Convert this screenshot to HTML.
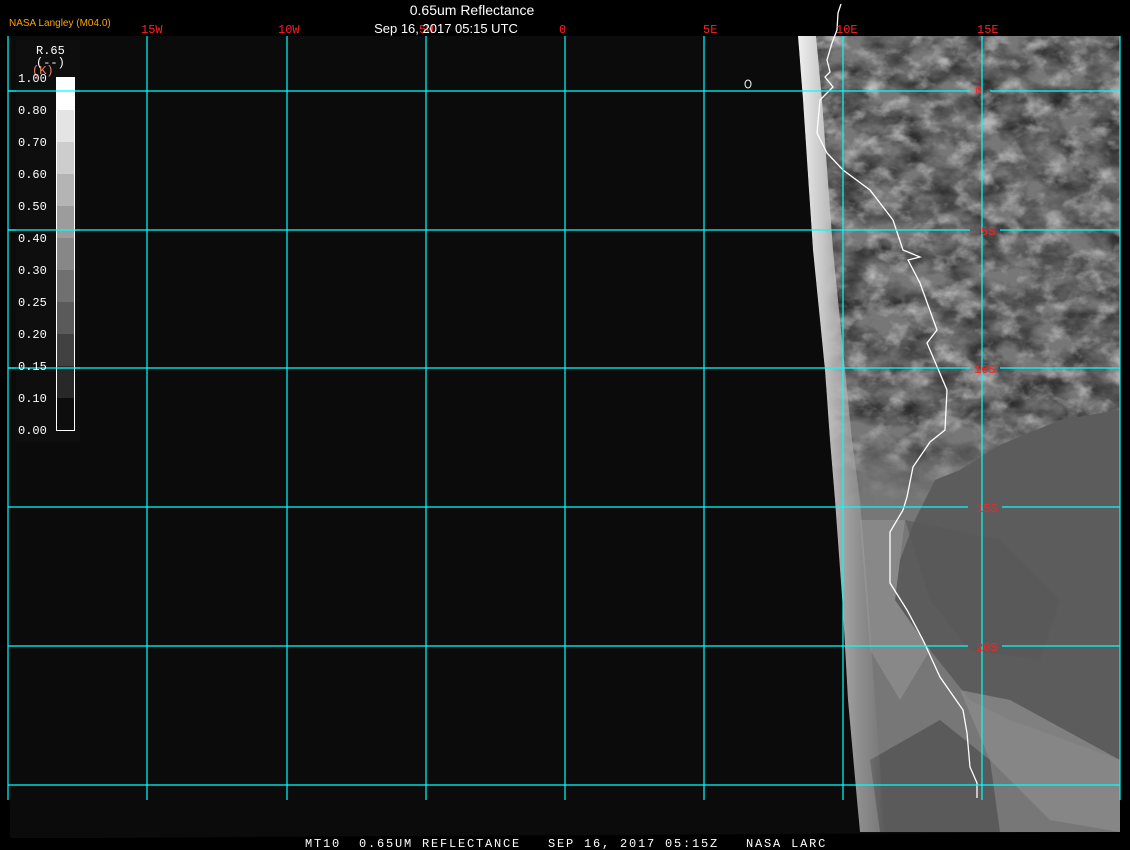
<!DOCTYPE html>
<html><head><meta charset="utf-8"><style>
html,body{margin:0;padding:0;background:#000;width:1130px;height:850px;overflow:hidden}
svg{display:block}
.m{font-family:"Liberation Mono",monospace;font-size:12px}
.s{font-family:"Liberation Sans",sans-serif}
</style></head><body>
<svg width="1130" height="850" viewBox="0 0 1130 850" xmlns="http://www.w3.org/2000/svg">
<defs>
<filter id="tex" x="0" y="0" width="100%" height="100%">
<feTurbulence type="fractalNoise" baseFrequency="0.03 0.045" numOctaves="4" seed="7"/>
<feColorMatrix type="matrix" values="0 0 0 0 0  0 0 0 0 0  0 0 0 0 0  1.3 0 0 0 -0.45"/>
</filter>
<filter id="tex2" x="0" y="0" width="100%" height="100%">
<feTurbulence type="fractalNoise" baseFrequency="0.045 0.06" numOctaves="4" seed="21"/>
<feColorMatrix type="matrix" values="0 0 0 0 1  0 0 0 0 1  0 0 0 0 1  1.3 0 0 0 -0.62"/>
</filter>
<linearGradient id="fade" x1="0" y1="0" x2="0" y2="1">
<stop offset="0" stop-color="#fff"/><stop offset="0.8" stop-color="#fff"/><stop offset="1" stop-color="#000"/>
</linearGradient>
<mask id="fm"><rect x="790" y="36" width="340" height="470" fill="url(#fade)"/></mask>
<linearGradient id="edge" x1="0" y1="0" x2="1" y2="0">
<stop offset="0" stop-color="#f0f0f0"/><stop offset="0.3" stop-color="#c4c4c4"/><stop offset="1" stop-color="#a0a0a0" stop-opacity="0"/>
</linearGradient>
<clipPath id="earth"><polygon points="798,36 803,100 813,250 825,370 830,440 835,500 843,610 848,700 857,800 860,832 1120,832 1120,36"/></clipPath>
</defs>
<rect x="0" y="0" width="1130" height="850" fill="#000"/>
<polygon points="8,36 1120,36 1120,832 800,834 400,836 100,838 10,838" fill="#0b0b0b"/>
<g clip-path="url(#earth)">
<rect x="790" y="36" width="340" height="800" fill="#777"/>
<g mask="url(#fm)">
<rect x="790" y="36" width="340" height="470" filter="url(#tex)"/>
<rect x="790" y="36" width="340" height="470" filter="url(#tex2)"/>
</g>
<polygon points="1120,410 1060,420 1000,445 960,470 935,480 915,520 900,560 895,600 930,650 970,700 1010,720 1120,760" fill="#5c5c5c"/>
<polygon points="905,520 1000,540 1060,600 1040,660 970,650 930,600" fill="#575757" opacity="0.6"/>
<polygon points="960,690 1010,700 1120,760 1120,832 1050,820 990,760" fill="#8a8a8a" opacity="0.8"/>
<polygon points="870,760 940,720 990,760 1000,832 880,832" fill="#4e4e4e" opacity="0.7"/>
<polygon points="860,520 905,520 895,600 930,650 900,700 870,650" fill="#999" opacity="0.5"/>
<polygon points="798,36 803,100 813,250 825,370 830,440 835,500 843,610 848,700 857,800 860,832 885,832 875,700 868,600 860,500 852,440 845,370 833,250 822,100 816,36" fill="url(#edge)"/>
</g>
<polyline fill="none" stroke="#fff" stroke-width="1.3" points="841,4 838,13 837,30 832,43 827,60 830,72 825,77 833,87 820,100 817,133 827,153 843,170 870,190 893,220 903,250 920,257 908,260 920,283 937,330 927,343 947,390 945,430 930,442 913,467 907,497 903,510 890,532 890,583 907,610 923,640 940,677 963,710 967,733 970,767 977,783 977,798"/>
<ellipse cx="748" cy="84" rx="3" ry="4" fill="none" stroke="#fff" stroke-width="1"/>
<g stroke="#00ffff" stroke-width="1.2">
<line x1="8" y1="36" x2="8" y2="800"/><line x1="147" y1="36" x2="147" y2="800"/><line x1="287" y1="36" x2="287" y2="800"/><line x1="426" y1="36" x2="426" y2="800"/><line x1="565" y1="36" x2="565" y2="800"/><line x1="704" y1="36" x2="704" y2="800"/><line x1="843" y1="36" x2="843" y2="800"/><line x1="982" y1="36" x2="982" y2="800"/><line x1="1120" y1="36" x2="1120" y2="800"/>
<line x1="8" y1="91" x2="970" y2="91"/><line x1="990" y1="91" x2="1120" y2="91"/>
<line x1="8" y1="230" x2="970" y2="230"/><line x1="1000" y1="230" x2="1120" y2="230"/>
<line x1="8" y1="368" x2="970" y2="368"/><line x1="1000" y1="368" x2="1120" y2="368"/>
<line x1="8" y1="507" x2="968" y2="507"/><line x1="1002" y1="507" x2="1120" y2="507"/>
<line x1="8" y1="646" x2="968" y2="646"/><line x1="1002" y1="646" x2="1120" y2="646"/>
<line x1="8" y1="785" x2="1120" y2="785"/>
</g>
<g class="m" fill="#ff2020" font-size="12">
<text x="975" y="94">0</text>
<text x="981" y="235">5S</text>
<text x="974" y="373">10S</text>
<text x="976" y="512">15S</text>
<text x="976" y="651">20S</text>
</g>
<g class="m" fill="#ff2020" font-size="12">
<text x="141" y="33">15W</text><text x="278" y="33">10W</text><text x="419" y="33">5W</text><text x="559" y="33">0</text><text x="703" y="33">5E</text><text x="836" y="33">10E</text><text x="977" y="33">15E</text>
</g>
<text x="472" y="15" class="s" font-size="14" fill="#fff" text-anchor="middle">0.65um Reflectance</text>
<text x="446" y="33" class="s" font-size="13" fill="#fff" text-anchor="middle">Sep 16, 2017 05:15 UTC</text>
<text x="9" y="26" class="s" font-size="10" fill="#ffa500">NASA Langley (M04.0)</text>
<rect x="16" y="40" width="64" height="402" fill="#0e0e0e"/>
<line x1="8" y1="91" x2="80" y2="91" stroke="#00ffff" stroke-width="1.2"/>
<line x1="8" y1="230" x2="80" y2="230" stroke="#00ffff" stroke-width="1.2"/>
<line x1="8" y1="368" x2="80" y2="368" stroke="#00ffff" stroke-width="1.2"/>
<g class="m" fill="#fff" font-size="12">
<text x="36" y="54">R.65</text><text x="36" y="66">(--)</text>
</g>
<text x="32" y="74" class="m" font-size="11" fill="#f08060">(K)</text>
<g>
<rect x="56" y="77" width="19" height="33" fill="#fff"/>
<rect x="56" y="110" width="19" height="32" fill="#e4e4e4"/>
<rect x="56" y="142" width="19" height="32" fill="#cdcdcd"/>
<rect x="56" y="174" width="19" height="32" fill="#b4b4b4"/>
<rect x="56" y="206" width="19" height="32" fill="#9c9c9c"/>
<rect x="56" y="238" width="19" height="32" fill="#878787"/>
<rect x="56" y="270" width="19" height="32" fill="#707070"/>
<rect x="56" y="302" width="19" height="32" fill="#5a5a5a"/>
<rect x="56" y="334" width="19" height="32" fill="#414141"/>
<rect x="56" y="366" width="19" height="32" fill="#282828"/>
<rect x="56" y="398" width="19" height="32" fill="#0d0d0d"/>
<rect x="56.5" y="77.5" width="18" height="353" fill="none" stroke="#fff" stroke-width="1"/>
</g>
<line x1="56" y1="91" x2="80" y2="91" stroke="#00ffff" stroke-width="1.2"/>
<line x1="56" y1="230" x2="80" y2="230" stroke="#00ffff" stroke-width="1.2"/>
<line x1="56" y1="368" x2="80" y2="368" stroke="#00ffff" stroke-width="1.2"/>
<g class="m" fill="#fff" font-size="12">
<text x="18" y="82">1.00</text><text x="18" y="114">0.80</text><text x="18" y="146">0.70</text><text x="18" y="178">0.60</text><text x="18" y="210">0.50</text><text x="18" y="242">0.40</text><text x="18" y="274">0.30</text><text x="18" y="306">0.25</text><text x="18" y="338">0.20</text><text x="18" y="370">0.15</text><text x="18" y="402">0.10</text><text x="18" y="434">0.00</text>
</g>
<text x="305" y="847" class="m" font-size="12.5" fill="#fff" letter-spacing="1.8" xml:space="preserve">MT10  0.65UM REFLECTANCE   SEP 16, 2017 05:15Z   NASA LARC</text>
</svg>
</body></html>
